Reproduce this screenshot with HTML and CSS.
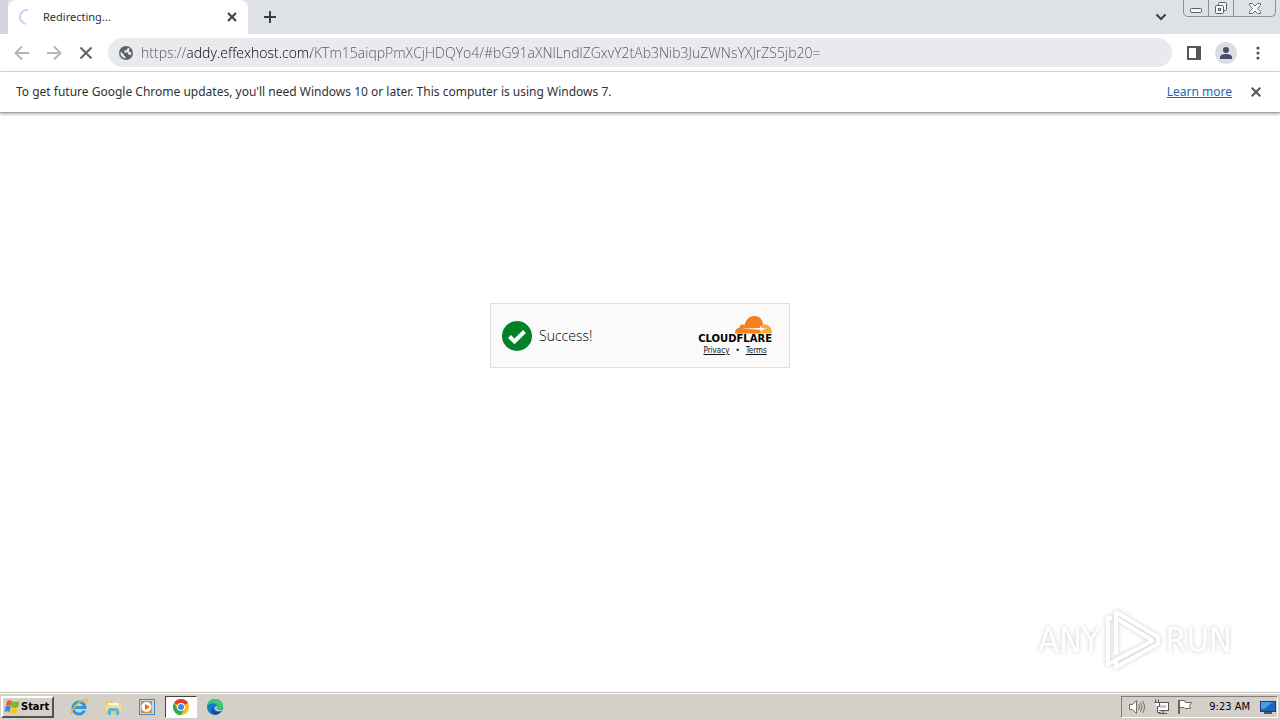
FILE: index.html
```html
<!DOCTYPE html>
<html lang="en">
<head>
<meta charset="utf-8">
<title>Redirecting...</title>
<link rel="stylesheet" href="styles.css">
</head>
<body>
<header class="tabstrip">
  <div class="tab">
    <svg class="spinner" width="16" height="16" viewBox="0 0 16 16"><path d="M9 1a7 7 0 0 0-2 13.900" fill="none" stroke="#c5d8f8" stroke-width="2"/></svg>
    <span class="tab-title">Redirecting...</span>
    <button class="icon-btn" aria-label="Close tab"><svg width="10" height="10" viewBox="0 0 10 10"><path d="M1 1l8 8M9 1L1 9" stroke="#3c4043" stroke-width="2"/></svg></button>
  </div>
  <button class="icon-btn new-tab" aria-label="New tab"><svg width="12" height="12" viewBox="0 0 12 12"><path d="M6 0v12M0 6h12" stroke="#3c4043" stroke-width="2"/></svg></button>
  <button class="icon-btn tab-search" aria-label="Search tabs"><svg width="12" height="8" viewBox="0 0 12 8"><path d="M1.500 1.500L6 6l4.500-4.500" fill="none" stroke="#3c4043" stroke-width="2"/></svg></button>
  <div class="window-buttons">
    <button class="win-btn" aria-label="Minimize"><svg width="12" height="14" viewBox="0 0 12 14"><rect x=".5" y="7.500" width="11" height="4" rx="1" fill="#f5f6f8" stroke="#5a5e66"/></svg></button>
    <button class="win-btn" aria-label="Restore"><svg width="14" height="14" viewBox="0 0 14 14" fill="#f5f6f8" stroke="#5a5e66"><rect x="4.500" y="1.500" width="8" height="8" rx="1"/><rect x="1.500" y="4.500" width="8" height="8" rx="1"/><rect x="4.500" y="7.500" width="2" height="2"/></svg></button>
    <button class="win-btn win-close" aria-label="Close"><svg width="12" height="14" viewBox="0 0 12 14"><path d="M.5 2.500h3L6 5l2.500-2.500h3v2L8.500 7.500l3 3v2h-3L6 10l-2.500 2.500h-3v-2l3-3-3-3z" fill="#f5f6f8" stroke="#6a6e76"/></svg></button>
  </div>
</header>
<nav class="toolbar">
  <button class="icon-btn nav-btn" aria-label="Back"><svg width="16" height="16" viewBox="0 0 16 16"><path d="M15 8H2M8 1.500L1.500 8 8 14.500" fill="none" stroke="#b4b6b9" stroke-width="2"/></svg></button>
  <button class="icon-btn nav-btn" aria-label="Forward"><svg width="16" height="16" viewBox="0 0 16 16"><path d="M1 8h13M8 1.500L14.500 8 8 14.500" fill="none" stroke="#b4b6b9" stroke-width="2"/></svg></button>
  <button class="icon-btn nav-btn" aria-label="Stop"><svg width="14" height="14" viewBox="0 0 14 14"><path d="M1.500 1.500l11 11M12.500 1.500l-11 11" stroke="#5f6368" stroke-width="2"/></svg></button>
  <div class="omnibox">
    <svg width="14" height="14" viewBox="0 0 14 14"><circle cx="7" cy="7" r="7" fill="#5f6368"/><path d="M1.600 5.600L5 8.800v1l1.500 1v1.700A5.600 5.600 0 0 1 1.600 5.600zM8.500 1.700v1.200L7 4.200H5.500v1.500L4.500 6.500h4.200l.8 2 1 .5h1.200a5.600 5.600 0 0 0 .8-2.500L10 5.500V4l1-.8a5.600 5.600 0 0 0-2.500-1.500z" fill="#e8eaed"/></svg>
    <input class="url" type="text" aria-label="Address" spellcheck="false" value="https://addy.effexhost.com/KTm15aiqpPmXCjHDQYo4/#bG91aXNlLndlZGxvY2tAb3Nib3JuZWNsYXJrZS5jb20=">
  </div>
  <div class="toolbar-end">
    <button class="icon-btn" aria-label="Side panel"><svg width="14" height="14" viewBox="0 0 14 14"><path d="M0 0h14v14H0zM2 2v10h7V2z" fill="#54585d" fill-rule="evenodd"/></svg></button>
    <button class="icon-btn avatar" aria-label="Profile"><svg width="12" height="12" viewBox="0 0 12 12" fill="#485069"><circle cx="6" cy="3" r="3"/><path d="M0 12v-2c0-2 3-3 6-3s6 1 6 3v2z"/></svg></button>
    <button class="icon-btn" aria-label="Menu"><svg width="4" height="14" viewBox="0 0 4 14" fill="#54585d"><circle cx="2" cy="2" r="1.600"/><circle cx="2" cy="7" r="1.600"/><circle cx="2" cy="12" r="1.600"/></svg></button>
  </div>
</nav>
<aside class="infobar">
  <span>To get future Google Chrome updates, you'll need Windows 10 or later. This computer is using Windows 7.</span>
  <a class="learn" href="#">Learn more</a>
  <button class="icon-btn" aria-label="Dismiss"><svg width="10" height="10" viewBox="0 0 10 10"><path d="M.7.7l8.600 8.600M9.300.7L.7 9.300" stroke="#54585d" stroke-width="2"/></svg></button>
</aside>
<main class="page">
  <section class="challenge">
    <svg width="30" height="30" viewBox="0 0 30 30"><circle cx="15" cy="15" r="15" fill="#038127"/><path d="M7.500 15.500l5 5L22.500 10.500" fill="none" stroke="#fff" stroke-width="4"/></svg>
    <span class="success">Success!</span>
    <div class="brand">
      <svg width="37" height="18" viewBox="0 0 37 18"><path d="M0 17.500c0-4 2-5.500 4.500-5.500C4 9 7 7.500 9.500 9 11 3 15 0 19.500 0c5 0 8 3.500 8.500 8l-2 9.500z" fill="#f4801f"/><path d="M24.500 17.500L28 8.500c5-1 9 3 9 9z" fill="#f9ab41"/><path d="M6 12.800l19-.8.8-3 1 3 5 .8-4.500 1-1 2.500-1-2.500z" fill="#fff"/></svg>
      <strong class="brand-name">CLOUDFLARE</strong>
      <div class="legal"><a href="#">Privacy</a><span>•</span><a href="#">Terms</a></div>
    </div>
  </section>
  <div class="watermark">
    <span>ANY</span>
    <svg width="57" height="64" viewBox="0 0 57 64" fill="none" stroke="#fff" stroke-width="4" stroke-linejoin="round"><path d="M12 46V4l42 25v7L12 59v-7l38-20M12 10l36 22"/><path d="M8 10H4v46l6-3"/></svg>
    <span>RUN</span>
  </div>
</main>
<footer class="taskbar">
  <button class="start"><svg width="17" height="16" viewBox="0 0 17 16"><path d="M3 2c2-1 4-1 5 0L7 7C5.500 6 4 6 2 7z" fill="#ef5a28"/><path d="M8.300 2.300c2 1 4.500 1 7 0L14 8c-2 1-4.500 1-7 0z" fill="#78b832"/><path d="M1.700 7.500c2-1 3.500-1 5 0L5.500 13C4 12 2 12 .5 13z" fill="#3c8bd9"/><path d="M7 8.500c2 1 4.500 1 7 0L12.500 14c-2 1-4.500 1-7 0z" fill="#fbc32b"/></svg>Start</button>
  <div class="quick">
    <button class="task" aria-label="Internet Explorer"><svg width="18" height="18" viewBox="0 0 18 18" fill="none"><path d="M14.500 12.500A6 6 0 1 1 15 9.500H4" stroke="#2a9be0" stroke-width="3"/><path d="M2 16C-1 14 8 3 15 1.500c3-.5 2 2 1 3.500" stroke="#e9b933" stroke-width="1.500"/></svg></button>
    <button class="task" aria-label="File Explorer"><svg width="17" height="17" viewBox="0 0 17 17"><path d="M1 2h6l1 2h7v11H1z" fill="#f1c75b"/><path d="M3 4h11v3H3z" fill="#fff8d8"/><path d="M1 6h15v6H1z" fill="#f9df88"/><path d="M3 16v-5q0-2 2-2h7q2 0 2 2v5h-3v-4H6v4z" fill="#65b2d9"/></svg></button>
    <button class="task" aria-label="Media Player"><svg width="16" height="16" viewBox="0 0 16 16"><rect x=".5" y=".5" width="15" height="15" fill="#b9dbf4" stroke="#4387bd"/><rect x="2" y="2" width="11" height="12" fill="#f08b1c"/><circle cx="7.500" cy="8" r="5" fill="#fff"/><path d="M6 5l5 3-5 3z" fill="#e96d0a"/></svg></button>
    <button class="task active" aria-label="Chrome"><svg width="16" height="16" viewBox="0 0 16 16"><circle cx="8" cy="8" r="8" fill="#fbc116"/><path d="M8 8L1.070 4A8 8 0 0 1 14.930 4z" fill="#e33b2e"/><path d="M1.070 4A8 8 0 0 0 8 16l3.500-6L8 8l-3.500 2z" fill="#2da94f"/><circle cx="8" cy="8" r="4" fill="#fff"/><circle cx="8" cy="8" r="3" fill="#4285f4"/></svg></button>
    <button class="task" aria-label="Edge"><svg width="16" height="16" viewBox="0 0 16 16"><circle cx="8" cy="8" r="8" fill="#1479ca"/><path d="M0 7C1 2 4 0 8 0c5 0 8 3 8 7 0 3-3 4-6 3-1-1 0-1 0-3 0-3-6-4-10 0z" fill="#43c76f"/><path d="M0 7c1-4 4-6 8-5.500C4 3 2 4 0 7z" fill="#27acd5"/><path d="M6 8c-1 4 3 6 8 4-1 1-3 3-5 3.500C5 15 3 11 6 8z" fill="#15458e"/><path d="M10 7c0 2-1 2 0 3 2 1.500 4 1 5.500.2L14 12c-4 1-7-1-6-4z" fill="#d3d0c8"/></svg></button>
  </div>
  <div class="tray">
    <svg width="18" height="16" viewBox="0 0 18 16" fill="none" stroke="#6f6f6f"><path d="M1.500 5.500h3l4-4v13l-4-4h-3z" fill="#fff"/><path d="M10.500 5q2 3 0 6M12.500 3.500q3 4.500 0 9M14.500 2q4 6 0 12"/></svg>
    <svg width="17" height="16" viewBox="0 0 17 16" fill="#fff" stroke="#555"><rect x="4.500" y="3.500" width="11" height="8"/><path d="M6 14.500h8M10 12v2"/><path d="M1.500 3.500h5v4h-2v6h3M2.500 3V.5M5.500 3V.5"/><rect x="7" y="6" width="6" height="3" fill="#ccc" stroke="none"/></svg>
    <svg width="16" height="16" viewBox="0 0 16 16" fill="#fff" stroke="#666"><path d="M2.500 1.500h5l1 2h6l-2 3 1 3H8l-1-1H2.500z"/><path d="M2 1v14" stroke-width="2"/></svg>
    <time class="clock">9:23 AM</time>
    <svg width="16" height="14" viewBox="0 0 16 14"><rect x=".5" y="1.500" width="15" height="10" fill="#1d65bd" stroke="#173f7d"/><path d="M1 2h12L4 9H1z" fill="#4d9be4"/><path d="M4 13h8" stroke="#555" stroke-width="2"/></svg>
  </div>
</footer>
</body>
</html>
```
FILE: styles.css
```css
* { box-sizing: border-box; }
body {
  margin: 0;
  min-height: 100vh;
  display: flex;
  flex-direction: column;
  background: #fff;
  color: #303134;
  font: 12px/16px "DejaVu Sans Condensed", "DejaVu Sans", sans-serif;
}
button { font: inherit; color: inherit; }
svg { display: block; flex: none; }
.icon-btn {
  display: grid;
  place-items: center;
  flex: none;
  padding: 0;
  border: 0;
  background: none;
}
.tabstrip {
  display: flex;
  height: 34px;
  padding: 0 4px 0 8px;
  background: #dee1e6;
  box-shadow: inset 8px 0 #d3d6dc;
}
.tab {
  display: flex;
  align-items: center;
  gap: 8px;
  width: 240px;
  padding: 0 11px;
  border-radius: 8px 8px 0 0;
  background: #fff;
}
.tab-title { flex: 1; font: 11px/16px "Noto Sans", sans-serif; }
.new-tab { width: 44px; }
.tab-search { width: 28px; margin-left: auto; }
.window-buttons {
  display: flex;
  height: 17px;
  margin-left: 8px;
  border: 1px solid #8b9099;
  border-top: 0;
  border-radius: 0 0 5px 5px;
}
.win-btn {
  display: grid;
  place-items: center;
  width: 25px;
  padding: 0;
  border: 0;
  border-right: 1px solid #8b9099;
  background: none;
}
.win-close { width: 41px; border-right: 0; }
.toolbar {
  display: flex;
  align-items: center;
  height: 38px;
  padding: 0 15px 0 6px;
  border-bottom: 1px solid #d8dadd;
}
.nav-btn { width: 32px; height: 32px; }
.omnibox {
  display: flex;
  flex: 1;
  align-items: center;
  gap: 8px;
  height: 29px;
  margin-left: 6px;
  padding: 0 11px;
  border-radius: 15px;
  background: #e8eaed;
}
.url {
  flex: 1;
  min-width: 0;
  padding: 0;
  border: 0;
  outline: 0;
  color: transparent;
  background: linear-gradient(90deg, #50545a 47px, #000 47px, #000 170px, #50545a 170px) text;
  font: 300 14px/20px "Open Sans", "Noto Sans", sans-serif;
}
.toolbar-end {
  display: flex;
  align-items: center;
  gap: 14px;
  margin-left: 15px;
}
.toolbar-end .icon-btn { min-width: 14px; height: 22px; }
.toolbar-end .avatar { width: 22px; border-radius: 50%; background: #dadde3; }
.infobar {
  display: flex;
  align-items: center;
  height: 41px;
  padding: 0 19px 0 16px;
  border-bottom: 1px solid #a5a5a5;
  box-shadow: 0 1px 3px #aaa;
  font: 12px/16px "Noto Sans", sans-serif;
}
.learn { margin: 0 19px 0 auto; color: #1967b5; }
.page {
  position: relative;
  display: grid;
  flex: 1;
  place-items: center;
  padding-bottom: 135px;
}
.challenge {
  display: flex;
  align-items: center;
  width: 300px;
  height: 65px;
  padding: 1px 17px 0 11px;
  border: 1px solid #e0e0e0;
  background: #fafafa;
  color: #111;
}
.success { flex: 1; margin-left: 7px; font: 300 14px/20px "Open Sans", "Noto Sans", sans-serif; color: #000; }
.brand { display: flex; flex-direction: column; align-items: flex-end; }
.brand-name { font: 700 10px/10px "DejaVu Sans", sans-serif; color: #000; }
.legal {
  display: flex;
  justify-content: center;
  gap: 6px;
  align-self: stretch;
  margin-top: 2px;
  font: 8px/10px "DejaVu Sans Condensed", sans-serif;
}
.legal a { color: inherit; }
.watermark {
  position: absolute;
  right: 48px;
  bottom: 20px;
  display: flex;
  align-items: center;
  gap: 4px;
  color: #fff;
  font: 34px/48px "DejaVu Sans Condensed", sans-serif;
  filter: drop-shadow(0 0 2px #ccc);
}
.taskbar {
  display: flex;
  align-items: center;
  height: 28px;
  padding: 1px 2px 0 1px;
  border-top: 1px solid #c4c1b9;
  background: #d4d0c8;
  box-shadow: inset 0 1px #fff;
  color: #000;
}
.start {
  display: flex;
  align-items: center;
  height: 22px;
  padding: 0 3px 0 1px;
  border: 2px solid;
  border-color: #fff #55534f #55534f #fff;
  background: #d4d0c8;
  font-size: 11px;
  font-weight: 700;
}
.quick { display: flex; gap: 2px; margin-left: 9px; }
.task {
  display: grid;
  place-items: center;
  width: 32px;
  height: 22px;
  padding: 0;
  border: 0;
  background: none;
}
.active {
  border: 1px solid;
  border-color: #444 #fff #fff #444;
  background: #fff;
}
.tray {
  display: flex;
  align-items: center;
  gap: 7px;
  height: 22px;
  margin-left: auto;
  padding: 0 1px 0 6px;
  border: 1px solid;
  border-color: #808080 #fff #fff #808080;
}
.clock { margin: 0 3px 0 9px; font-size: 11px; }
```
